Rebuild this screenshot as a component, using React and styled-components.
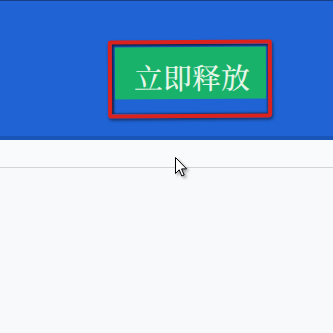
import React from "react";
import styled, { createGlobalStyle } from "styled-components";

const Global = createGlobalStyle`
  html, body { margin: 0; padding: 0; background: #f8f9fb; }
  body { font-family: "Noto Sans", "Noto Sans CJK SC", sans-serif; overflow: hidden; }
`;

const Page = styled.div`
  position: relative;
  width: 333px;
  height: 333px;
  background: #f8f9fb;
  overflow: hidden;
`;

const Header = styled.header`
  height: 140px;
  box-sizing: border-box;
  background: #1f63d4;
  border-top: 1px solid #183f86;
  border-bottom: 4px solid #1a56b8;
  display: flex;
  justify-content: flex-end;
  align-items: flex-start;
  padding: 39px 61px 0 0;
`;

const Annotation = styled.div`
  border: 4px solid #dc221c;
  border-radius: 3px 2px 4px 3px;
  padding: 3px 2px 15px 3px;
  box-shadow: inset 2px 2px 2px rgba(10, 20, 40, 0.75),
    inset -1px -1px 2px rgba(10, 20, 40, 0.6), 1px 2px 3px rgba(10, 20, 40, 0.6);
  transform: rotate(-0.3deg);
`;

const ReleaseButton = styled.button`
  display: flex;
  align-items: center;
  justify-content: center;
  width: 151px;
  height: 52px;
  padding: 6px 0 0 3px;
  border: none;
  background: #19b26b;
  color: #e6f6e8;
  font-family: "Noto Serif CJK SC", "Noto Sans CJK SC", serif;
  font-size: 29px;
  font-weight: 500;
  line-height: 1;
  cursor: default;
  box-sizing: border-box;
`;

const SubBar = styled.div`
  height: 27px;
  background: #f9fafb;
  border-bottom: 1px solid #d3d4d6;
`;

const Content = styled.main`
  height: 165px;
  background: #f8f9fb;
`;

const Cursor = styled.svg`
  position: absolute;
  left: 175px;
  top: 157px;
  filter: drop-shadow(2px 2px 1.5px rgba(0, 0, 0, 0.35));
`;

export default function App() {
  return (
    <Page>
      <Global />
      <Header>
        <Annotation>
          <ReleaseButton>立即释放</ReleaseButton>
        </Annotation>
      </Header>
      <SubBar />
      <Content />
      <Cursor width="13" height="21" viewBox="0 0 13 21">
        <path
          d="M0.5 0.5 L0.5 16.5 L4.2 12.8 L6.8 19 L9.2 18 L6.6 11.9 L11.6 11.9 Z"
          fill="#ffffff"
          stroke="#000000"
          strokeWidth="1"
          strokeLinejoin="miter"
        />
      </Cursor>
    </Page>
  );
}
